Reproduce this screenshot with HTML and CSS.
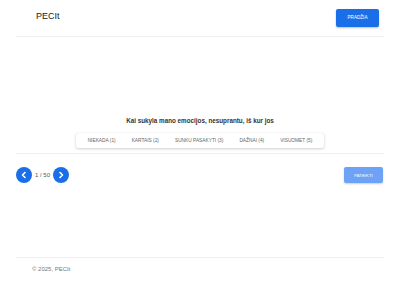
FILE: index.html
```html
<!DOCTYPE html>
<html lang="lt">
<head>
    <meta charset="UTF-8">
    <meta name="viewport" content="width=device-width, initial-scale=1.0">
    <title>PECIt</title>
    <link rel="stylesheet" href="styles.css">
</head>
<body>
    <div class="page">
        <header class="top-bar">
            <div class="brand">PECIt</div>
            <a href="#" class="btn btn-primary">PRADŽIA</a>
        </header>

        <main class="content">
            <section class="quiz">
                <h2 class="question">Kai sukyla mano emocijos, nesuprantu, iš kur jos</h2>
                <div class="options">
                    <button class="option">NIEKADA (1)</button>
                    <button class="option">KARTAIS (2)</button>
                    <button class="option">SUNKU PASAKYTI (3)</button>
                    <button class="option">DAŽNAI (4)</button>
                    <button class="option">VISUOMET (5)</button>
                </div>
            </section>

            <div class="quiz-nav">
                <div class="pager">
                    <button class="pager-btn" aria-label="Atgal">
                        <svg width="8" height="8" viewBox="0 0 8 8"><path d="M5 1.5 L2.5 4 L5 6.5" fill="none" stroke="#fff" stroke-width="1.6" stroke-linecap="round" stroke-linejoin="round"/></svg>
                    </button>
                    <span class="pager-count">1 / 50</span>
                    <button class="pager-btn" aria-label="Pirmyn">
                        <svg width="8" height="8" viewBox="0 0 8 8"><path d="M3 1.5 L5.5 4 L3 6.5" fill="none" stroke="#fff" stroke-width="1.6" stroke-linecap="round" stroke-linejoin="round"/></svg>
                    </button>
                </div>
                <button class="btn btn-submit">PATEIKTI</button>
            </div>
        </main>

        <footer class="footer">© 2025, PECIt</footer>
    </div>
</body>
</html>
```

FILE: styles.css
```css
* {
    margin: 0;
    padding: 0;
    box-sizing: border-box;
}

body {
    font-family: 'Liberation Sans', Arial, sans-serif;
    background: #fff;
    color: #333;
}

.page {
    height: 300px;
    padding: 0 16px;
    display: flex;
    flex-direction: column;
}

.top-bar {
    height: 37px;
    flex-shrink: 0;
    display: flex;
    align-items: center;
    justify-content: space-between;
    padding: 0 5px 1px 20px;
    border-bottom: 1px solid #eeeeee;
}

.brand {
    font-size: 9px;
    color: #222;
    margin-bottom: 3px;
}

.btn {
    border: none;
    color: #fff;
    text-decoration: none;
    display: flex;
    align-items: center;
    justify-content: center;
    font-family: inherit;
    border-radius: 2px;
}

.btn-primary {
    width: 43px;
    height: 18px;
    font-size: 4.6px;
    background: #1a6fe9;
    box-shadow: 0 1px 2px rgba(0, 0, 0, 0.25);
}

.content {
    flex: 1;
}

.quiz {
    display: flex;
    flex-direction: column;
    align-items: center;
    gap: 8px;
    padding: 80px 0 5px;
    border-bottom: 1px solid #eeeeee;
}

.question {
    font-size: 6.3px;
    line-height: 8px;
    font-weight: 700;
    color: #333;
}

.options {
    display: flex;
    height: 15px;
    padding: 0 4px;
    background: #fff;
    border-radius: 2px;
    box-shadow: 0 1px 3px rgba(0, 0, 0, 0.18), 0 0 1px rgba(0, 0, 0, 0.12);
}

.option {
    border: none;
    background: transparent;
    font-family: inherit;
    font-size: 4.8px;
    color: #666;
    padding: 0 8px;
}

.quiz-nav {
    display: flex;
    align-items: center;
    justify-content: space-between;
    margin-top: 13px;
    padding-right: 1px;
}

.pager {
    display: flex;
    align-items: center;
    gap: 3px;
}

.pager-btn {
    width: 16px;
    height: 16px;
    border: none;
    border-radius: 50%;
    background: #1a6fe9;
    display: flex;
    align-items: center;
    justify-content: center;
}

.pager-count {
    font-size: 6px;
    color: #555;
}

.btn-submit {
    width: 39px;
    height: 16px;
    font-size: 4.3px;
    background: #6ea2f6;
    box-shadow: 0 1px 2px rgba(0, 0, 0, 0.2);
}

.footer {
    height: 43px;
    flex-shrink: 0;
    border-top: 1px solid #eeeeee;
    padding: 7px 0 0 16px;
    font-size: 6px;
    line-height: 8px;
    color: #777;
}
```
